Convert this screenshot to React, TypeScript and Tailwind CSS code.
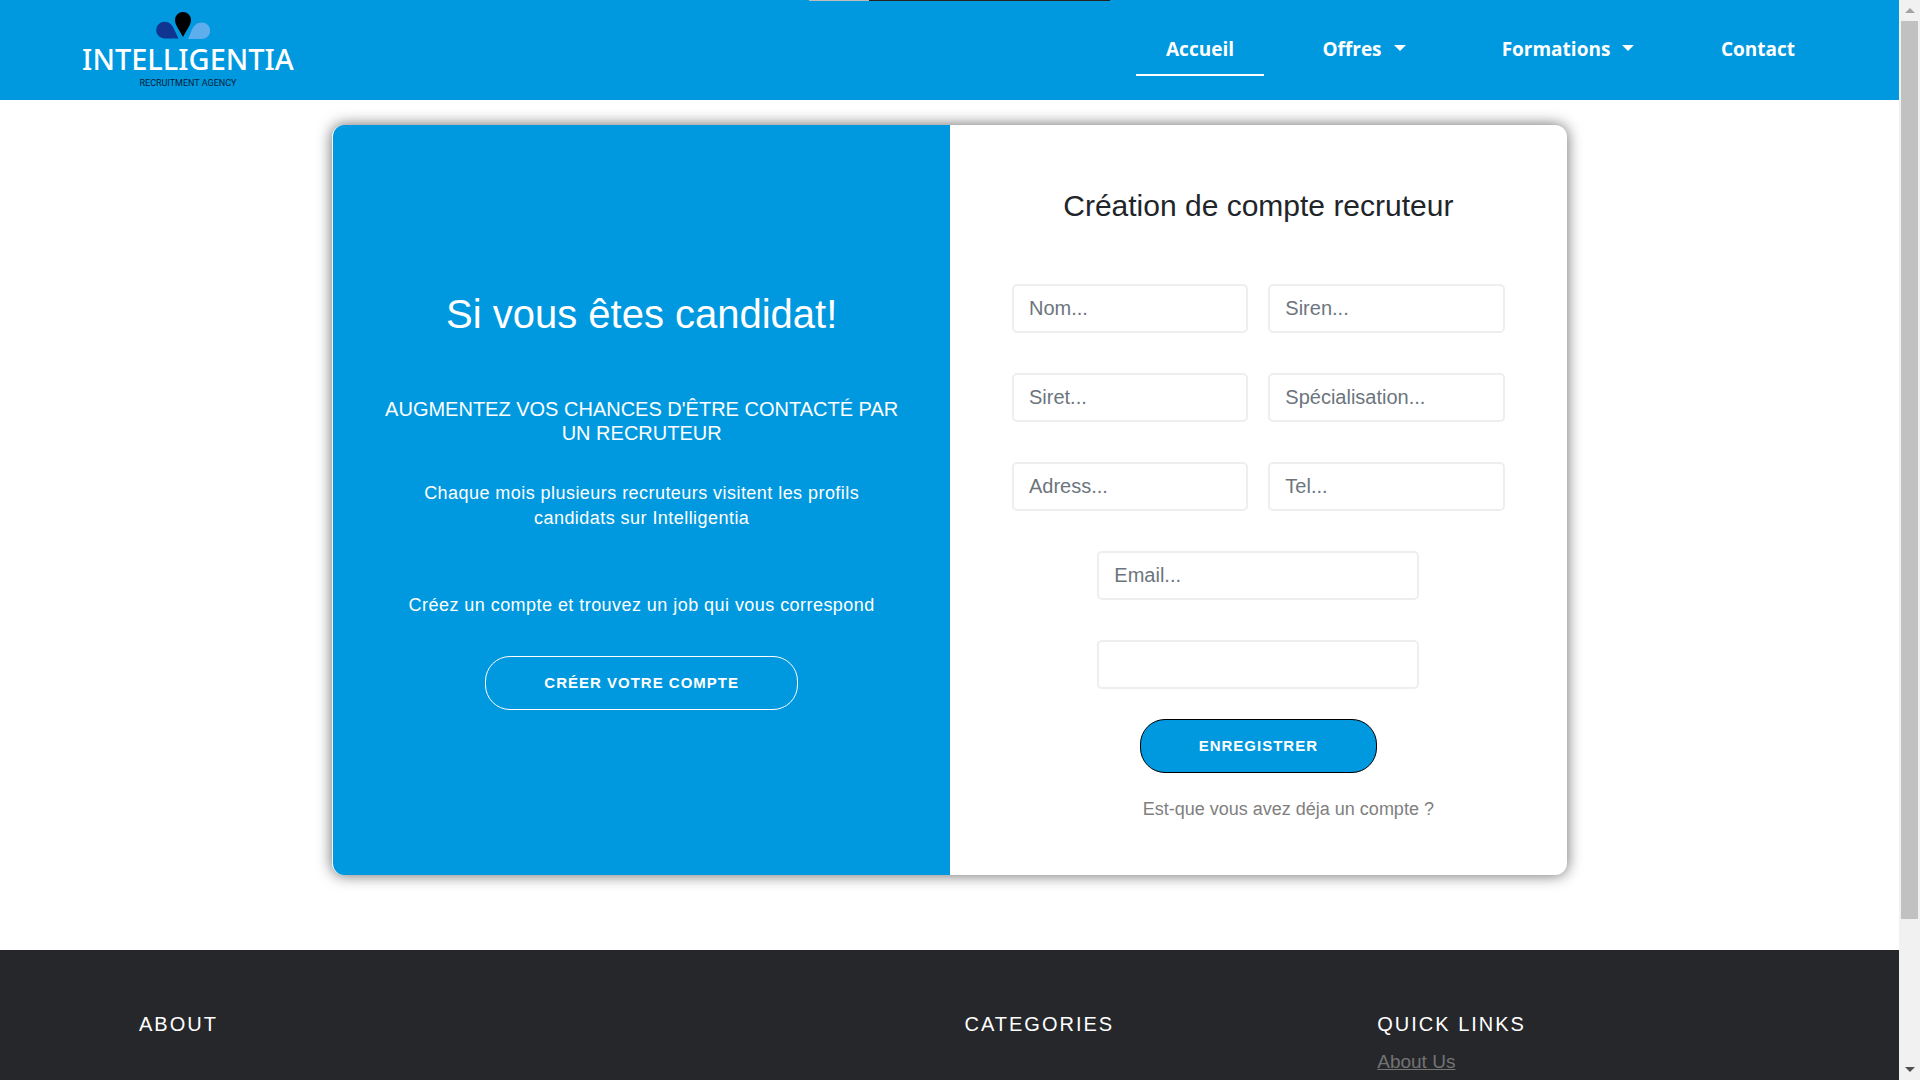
import React from "react";

function Logo() {
  return (
    <a href="#" className="flex w-[214px] flex-col items-center pt-3">
      <svg viewBox="0 0 54 27" className="mr-[10px] h-[27px] w-[54px]" aria-hidden="true">
        <path d="M8.500 9.800c5 0 7.500 3.200 9 6.200l5 10.500H8.500a8.300 8.300 0 0 1 0-16.700z" fill="#103591" />
        <path d="M46 10.500c-5 0-7.500 3-9.500 6l-4.500 10.500H46a8.200 8.200 0 0 0 0-16.500z" fill="#5eaeee" />
        <path d="M27 0a8 8 0 0 1 8 8c0 5-5 11-8 17C24 19 19 13 19 8a8 8 0 0 1 8-8z" fill="#000" />
      </svg>
      <span className="font-['Noto_Sans',sans-serif] text-[29px] leading-[40px] font-medium text-white">INTELLIGENTIA</span>
      <span className="font-['Roboto',sans-serif] text-[9px] leading-[8px] text-[#06213a]">RECRUITMENT AGENCY</span>
    </a>
  );
}

function Caret() {
  return <span className="mb-0.5 ml-3 border-x-[6px] border-t-[6px] border-x-transparent border-t-white" />;
}

function Field({ label, type = "text", placeholder = label + "..." }: { label: string; type?: string; placeholder?: string }) {
  return (
    <input
      type={type}
      aria-label={label}
      placeholder={placeholder}
      className="h-[49px] w-full rounded-[5px] border-2 border-[#eeeeee] bg-white px-[15px] text-xl text-[#212529] outline-none placeholder:text-[#6c757d]"
    />
  );
}

function Scrollbar() {
  return (
    <div className="flex w-[21px] shrink-0 flex-col items-center bg-[#f1f1f1]" aria-hidden="true">
      <div className="flex h-[21px] items-center">
        <span className="border-x-[5px] border-b-[5px] border-x-transparent border-b-[#a3a3a3]" />
      </div>
      <div className="flex w-[17px] grow flex-col">
        <div className="grow-[898] basis-0 bg-[#c1c1c1]" />
        <div className="grow-[140] basis-0" />
      </div>
      <div className="flex h-[21px] items-center">
        <span className="border-x-[5px] border-t-[5px] border-x-transparent border-t-[#505050]" />
      </div>
    </div>
  );
}

export default function App() {
  return (
    <div className="flex h-screen overflow-hidden bg-white font-['Liberation_Sans',Arial,sans-serif]">
      <div className="min-w-0 grow">
        <header className="relative flex h-[100px] items-start justify-between bg-[#0099df] pr-[74px] pl-[81px]">
          <div className="absolute top-0 left-[809px] flex h-px w-[301px]">
            <span className="w-[60px] bg-[#bdbdbd]" />
            <span className="grow bg-[#222222]" />
          </div>
          <Logo />
          <nav className="flex items-start pt-6 font-['Open_Sans',sans-serif] text-[19px] leading-[50px] font-bold text-white">
            <a href="#" className="w-32 border-b-2 border-white text-center">Accueil</a>
            <button type="button" className="ml-[30px] flex w-[140px] items-center justify-center">Offres<Caret /></button>
            <button type="button" className="ml-[40px] flex w-[188px] items-center justify-center">Formations<Caret /></button>
            <a href="#" className="ml-[29px] w-[134px] text-center">Contact</a>
          </nav>
        </header>

        <main className="pt-[25px] pb-[75px]">
          <div className="mx-auto grid w-[65%] grid-cols-2 overflow-hidden rounded-xl border-l border-white bg-white shadow-[0_0_15px_rgba(0,0,0,0.6)]">
            <section className="flex flex-col items-center justify-center bg-[#0099df] px-[51px] text-center text-white">
              <h1 className="text-[40px] leading-[48px]">Si vous êtes candidat!</h1>
              <h4 className="mt-[59px] text-xl leading-6">AUGMENTEZ VOS CHANCES D'ÊTRE CONTACTÉ PAR UN RECRUTEUR</h4>
              <p className="mt-9 text-[18px] leading-[25px] tracking-wide">Chaque mois plusieurs recruteurs visitent les profils candidats sur Intelligentia</p>
              <p className="mt-[62px] text-[18px] leading-[25px] tracking-wide">Créez un compte et trouvez un job qui vous correspond</p>
              <button type="button" className="mt-[38px] h-[54px] rounded-[25px] border border-white px-[58px] text-[15px] font-bold tracking-[1px]">
                CRÉER VOTRE COMPTE
              </button>
            </section>
            <form className="flex flex-col items-center pt-[63px] pb-[52px]">
              <h2 className="text-[30px] leading-9 text-[#212529]">Création de compte recruteur</h2>
              <div className="mt-[60px] grid w-full grid-cols-2 gap-x-5 gap-y-10 px-[62px]">
                <Field label="Nom" />
                <Field label="Siren" />
                <Field label="Siret" />
                <Field label="Spécialisation" />
                <Field label="Adress" />
                <Field label="Tel" />
              </div>
              <div className="mt-10 flex w-[322px] flex-col gap-10">
                <Field label="Email" type="email" />
                <Field label="Mot de passe" type="password" placeholder="" />
              </div>
              <button type="submit" className="mt-[30px] h-[54px] rounded-[25px] border border-black bg-[#0099df] px-[58px] text-[15px] font-bold tracking-[1px] text-white">
                ENREGISTRER
              </button>
              <a href="#" className="mt-[23px] pl-[60px] text-[18px] leading-[27px] text-[#808080]">Est-que vous avez déja un compte ?</a>
            </form>
          </div>
        </main>

        <footer className="grid h-[400px] grid-cols-[2fr_1fr_1fr] bg-[#26272b] pt-[62px] pr-[109px] pl-[139px] text-[#737373]">
          <h6 className="text-xl leading-6 tracking-[2px] text-white">ABOUT</h6>
          <h6 className="text-xl leading-6 tracking-[2px] text-white">CATEGORIES</h6>
          <div>
            <h6 className="text-xl leading-6 tracking-[2px] text-white">QUICK LINKS</h6>
            <a href="#" className="mt-3 block text-[19px] leading-7 underline">About Us</a>
          </div>
        </footer>
      </div>
      <Scrollbar />
    </div>
  );
}
